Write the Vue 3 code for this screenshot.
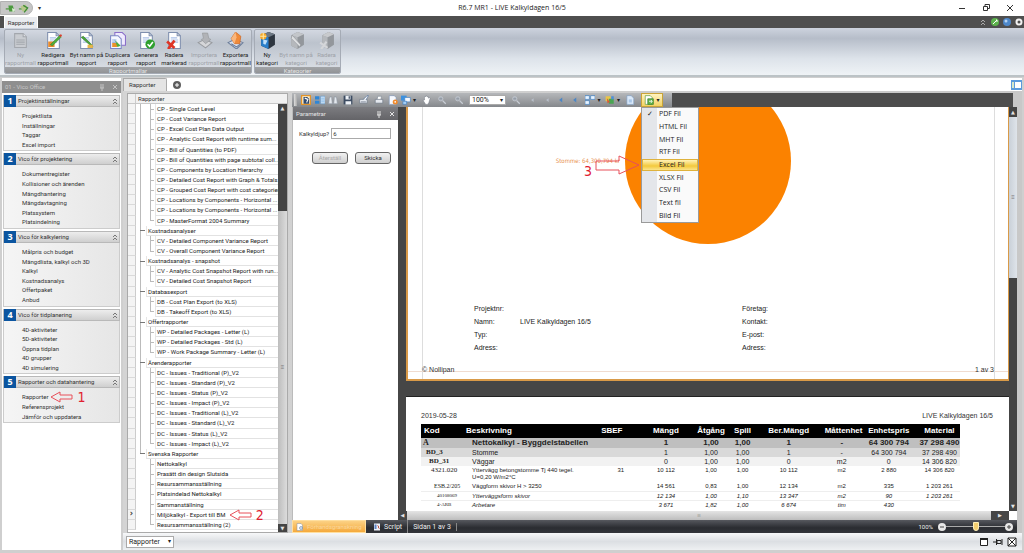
<script setup>
import { ref } from 'vue'

const sheet = (c = '#fff', s = '#7f8fae') =>
  `<path d="M2.5.5h8l3 3v12h-11z" fill="${c}" stroke="${s}"/><path d="M10.5.5v3h3" fill="none" stroke="${s}"/><path d="M4.500 5.500h6M4.500 7.500h7M4.500 9.500h7" stroke="#a9bfe6"/>`

const icons = {
  newGray: `<path d="M2.500 1.500h8l3 3v10h-11z" fill="#c9ccd1" stroke="#a3a7ad"/><path d="M4 7.500h8M4 9.500h8M4 11.500h8" stroke="#a3a7ad"/><path d="M10.500 1.500v3h3" stroke="#a3a7ad" fill="#dfe1e4"/>`,
  edit: `${sheet()}<path d="M3 9h6v5H3z" fill="#e98b2c"/><path d="M5 12 14 3l1 2-8 8z" fill="#4fae3c" stroke="#2f7d25" stroke-width=".5"/><path d="M13 3l2 2 1-2-1-1z" fill="#d9402c"/>`,
  rename: `${sheet()}<path d="M3 5l9 8 2 1-1-2-8-8z" fill="#49a53b" stroke="#2a6d22" stroke-width=".5"/><path d="M9 12h5v3H9z" fill="#e7b54a"/>`,
  duplicate: `<path d="M5.500.5h7l3 3v9h-10z" fill="#efeafd" stroke="#8a6fc9"/><path d="M1.500 3.500h7l3 3v9h-10z" fill="#f5f8ff" stroke="#7c86c4"/><path d="M3 10h5v4H3z" fill="#e9912c"/><path d="M5 7l6 6-3 1z" fill="#4fae3c"/><path d="M3 7.500h4M3 9.500h4" stroke="#88a7df"/>`,
  generate: `${sheet()}<circle cx="11.500" cy="11.500" r="4.500" fill="#2ea02e"/><path d="M9 11.500l2 2 3-4" stroke="#fff" stroke-width="1.500" fill="none"/>`,
  remove: `${sheet()}<path d="M1 9l7 6M8 8l-6 8" stroke="#df3526" stroke-width="2.600"/>`,
  importGray: `<path d="M2 10l6-3 7 3-6 5z" fill="#d5d6d9" stroke="#989ba0"/><path d="M6 1h5l1 5 2 1-5 4-4-4 2-1z" fill="#b1b3b7" stroke="#94979b" stroke-width=".6"/>`,
  exportUp: `<path d="M1 10l6-3 8 3-6 6z" fill="#d7e2f2" stroke="#6c7d99"/><path d="M4 11l5 3 4-3" fill="none" stroke="#6c7d99"/><path d="M8 0l5 4-1 7H7L4 6z" fill="#ef8a3a" stroke="#c9601a" stroke-width=".6"/><path d="M8 0l1 5-2 6L4 6z" fill="#f9b67c"/>`,
  category: `<path d="M2 3l7-3 6 2v10l-6 4-7-3z" fill="#2e3640"/><path d="M2 3l7 2v11l-7-3z" fill="#2a7fcb"/><path d="M2 3l7-3 6 2-6 3z" fill="#6d7884"/><path d="M4 7l4 1-2 4-2-1z" fill="#bfe0fa"/><circle cx="4" cy="4" r="3" fill="#f5a623"/><path d="M4 1v6M1 4h6" stroke="#ffe9a8"/>`,
  categoryGray: `<path d="M3 3l6-3 6 2v10l-6 4-6-3z" fill="#93979c"/><path d="M3 3l6 2v11l-6-3z" fill="#b5b8bc"/><path d="M3 3l6-3 6 2-6 3z" fill="#c3c6ca"/><path d="M4 3l8 9-1 2-8-8z" fill="#dcdee0" stroke="#888c91" stroke-width=".5"/>`,
  categoryDel: `<path d="M4 3l6-3 5 2v10l-6 4-5-3z" fill="#93979c"/><path d="M4 3l5 2v11l-5-3z" fill="#b5b8bc"/><path d="M4 3l6-3 5 2-6 3z" fill="#c8cacd"/><path d="M2 10l7 5M8 9l-5 7" stroke="#d4d6d9" stroke-width="2"/>`,
  search: `<path d="M1 1h14v14H1z" fill="#fff5d8" stroke="#e2942a" stroke-width="2"/><path d="M4 3h6l3 3v8H4z" fill="#314a6d"/><path d="M6 5l5 2-2 5" stroke="#fff" stroke-width="1.800" fill="none"/>`,
  thumbs: `<path d="M0 2h7v5H0zM0 9h7v5H0z" fill="#2f86d6"/><path d="M9 2h7v12H9z" fill="#e9f3fd" stroke="#5794cf"/><path d="M10 5h5M10 8h5M10 11h5" stroke="#2f86d6"/>`,
  binoculars: `<path d="M3 3h3v3l1 8H1l1-8zM10 3h3l1 3 1 8H9l1-8z" fill="#e3e7ec" stroke="#8d96a3"/>`,
  save: `<path d="M1 1h14v14H1z" fill="#3d4c62"/><path d="M4 1h8v6H4zM4 10h9v5H4z" fill="#edf1f6"/><path d="M9 2h2v4H9z" fill="#3d4c62"/>`,
  printQuick: `<path d="M1 7h12v6H1z" fill="#e4e8ee" stroke="#6a7484"/><path d="M7 7l6-6h2l-4 7" fill="#fff" stroke="#4c6d9c"/><path d="M3 11h8" stroke="#566173"/>`,
  print: `<path d="M2 7h12v6H2z" fill="#e4e8ee" stroke="#6a7484"/><path d="M5 7l1-5h6l-1 5z" fill="#fff" stroke="#7f8896"/>`,
  pageSetup: `<path d="M2 1h8l3 3v11H2z" fill="#f6f9ff" stroke="#7d93b5"/><circle cx="11.500" cy="11" r="4" fill="#ef8a2c"/><circle cx="11.500" cy="11" r="1.300" fill="#fff"/>`,
  scale: `<path d="M0 1h9v8H0z" fill="#3d91df"/><path d="M6 4h9v7H6z" fill="#f4f8ff" stroke="#3f7fc1"/><path d="M3 10h6v5H3z" fill="#a7cff5" stroke="#3f7fc1"/>`,
  hand: `<path d="M4 8V3l1-1 1 1 1-2 1 1v1l1-1 1 1v2l2-1 1 1-2 7-2 3H6L2 9l1-1z" fill="#fff" stroke="#5b6470" stroke-width=".6"/>`,
  magnify: `<circle cx="6" cy="6" r="3.500" fill="#a9b0ba" stroke="#c9ced6"/><path d="M9 9l5 5" stroke="#c9ced6" stroke-width="2"/><path d="M4 6h4" stroke="#7f8792"/>`,
  left: `<path d="M9 5L5 8l4 3z" fill="#b9c0ca"/>`,
  blueLeft: `<path d="M10 4L5 8l5 4z" fill="#4d86c4"/>`,
  pages: `<path d="M0 1h7v6H0zM9 1h7v6H9zM0 9h7v6H0z" fill="#e9f4ff" stroke="#2f79c2"/>`,
  color: `<path d="M1 2h8v8H1z" fill="#e8c64a"/><path d="M6 6h8v8H6z" fill="#4aa552"/><path d="M3 5l5 6-4 2z" fill="#d95b33"/><path d="M10 2h4v5h-4z" fill="#4d8fd8"/>`,
  watermark: `<path d="M3 1h7l4 4v10H3z" fill="#dbe9f9" stroke="#7f9fc4"/><path d="M6 7h5v5H6z" fill="#a9c7e8"/>`,
  exportDoc: `<path d="M2 1h8l3 3v11H2z" fill="#fff" stroke="#4b9238"/><path d="M6 6h9v9H6z" fill="#63b14a" stroke="#2f7a25"/><path d="M8 10h5M11 8l2 2-2 3" stroke="#fff" stroke-width="1.300" fill="none"/>`,
}

const ribbon = [
  { title: 'Rapportmallar', cls: 'wide', buttons: [
    ['newGray', 'Ny', 'rapportmall', true],
    ['edit', 'Redigera', 'rapportmall'],
    ['rename', 'Byt namn på', 'rapport'],
    ['duplicate', 'Duplicera', 'rapport'],
    ['generate', 'Generera', 'rapport'],
    ['remove', 'Radera', 'markerad'],
    ['importGray', 'Importera', 'rapportmall', true],
    ['exportUp', 'Exportera', 'rapportmall'],
  ] },
  { title: 'Kategorier', cls: 'narrow', buttons: [
    ['category', 'Ny', 'kategori'],
    ['categoryGray', 'Byt namn på', 'kategori', true],
    ['categoryDel', 'Radera', 'kategori', true],
  ] },
]

const groups = [
  ['Projektinställningar', ['Projektlista', 'Inställningar', 'Taggar', 'Excel import']],
  ['Vico för projektering', ['Dokumentregister', 'Kollisioner och ärenden', 'Mängdhantering', 'Mängdavtagning', 'Platssystem', 'Platsindelning']],
  ['Vico för kalkylering', ['Målpris och budget', 'Mängdlista, kalkyl och 3D', 'Kalkyl', 'Kostnadsanalys', 'Offertpaket', 'Anbud']],
  ['Vico för tidplanering', ['4D-aktiviteter', '5D-aktiviteter', 'Öppna tidplan', '4D grupper', '4D simulering']],
  ['Rapporter och datahantering', ['Rapporter', 'Referensprojekt', 'Jämför och uppdatera']],
]

const tree = [
  [null, ['CP - Single Cost Level', 'CP - Cost Variance Report', 'CP - Excel Cost Plan Data Output', 'CP - Analytic Cost Report with runtime sum...', 'CP - Bill of Quantities (to PDF)', 'CP - Bill of Quantities with page subtotal coll...', 'CP - Components by Location Hierarchy', 'CP - Detailed Cost Report with Graph & Totals', 'CP - Grouped Cost Report with cost categories', 'CP - Locations by Components - Horizontal ...', 'CP - Locations by Components - Horizontal ...', 'CP - MasterFormat 2004 Summary']],
  ['Kostnadsanalyser', ['CV - Detailed Component Variance Report', 'CV - Overall Component Variance Report']],
  ['Kostnadsanalys - snapshot', ['CV - Analytic Cost Snapshot Report with run...', 'CV - Detailed Cost Snapshot Report']],
  ['Databasexport', ['DB - Cost Plan Export (to XLS)', 'DB - Takeoff Export (to XLS)']],
  ['Offertrapporter', ['WP - Detailed Packages - Letter (L)', 'WP - Detailed Packages - Std (L)', 'WP - Work Package Summary - Letter (L)']],
  ['Ärenderapporter', ['DC - Issues - Traditional (P)_V2', 'DC - Issues - Standard (P)_V2', 'DC - Issues - Status (P)_V2', 'DC - Issues - Impact (P)_V2', 'DC - Issues - Traditional (L)_V2', 'DC - Issues - Standard (L)_V2', 'DC - Issues - Status (L)_V2', 'DC - Issues - Impact (L)_V2']],
  ['Svenska Rapporter', ['Nettokalkyl', 'Prasätt din design Slutsida', 'Resursammansställning', 'Platsindelad Nettokalkyl', 'Sammanställning', 'Miljökalkyl - Export till BM', 'Resursammansställning (2)']],
]
const rows = tree.flatMap(([name, kids], gi) => {
  const lastGroup = gi === tree.length - 1
  const out = name ? [{ text: name, cat: true, lastGroup }] : []
  kids.forEach((text, i) => out.push({ text, last: i === kids.length - 1, lastGroup, current: text.startsWith('Miljö') }))
  return out
})

const tools = ['search', 'thumbs', 'binoculars', 'save', 'printQuick', 'print', 'pageSetup', 'scale', 'hand', 'magnify', 'magnify']
const toolsAfter = ['magnify', 'left', 'left', 'blueLeft', 'blueLeft', 'pages', 'color', 'watermark']
const dropdowns = ['scale', 'pages', 'color']

const formats = ['PDF Fil', 'HTML Fil', 'MHT Fil', 'RTF Fil', 'Excel Fil', 'XLSX Fil', 'CSV Fil', 'Text fil', 'Bild Fil']
const chosen = ref('PDF Fil')
const hovered = ref('Excel Fil')

const heads = ['Kod', 'Beskrivning', 'SBEF', 'Mängd', 'Åtgång', 'Spill', 'Ber.Mängd', 'Måttenhet', 'Enhetspris', 'Material']
const lines = [
  ['l0', 'A', 'Nettokalkyl - Byggdelstabellen', '', '1', '1,00', '1,00', '1', '-', '64 300 794', '37 298 490'],
  ['l1', 'BD_3', 'Stomme', '', '1', '1,00', '1,00', '1', '-', '64 300 794', '37 298 490'],
  ['l2', 'BD_31', 'Väggar', '', '0', '1,00', '1,00', '0', 'm2', '0', '14 306 820'],
  ['l3', '4321.020', 'Yttervägg betongstomme Tj 440 tegel.\nU=0,20 W/m2°C', '31', '10 112', '1,00', '1,00', '10 112', 'm2', '2 880', '14 306 820'],
  ['l4', 'ESB.2/205', 'Väggform skivor H > 3250', '', '14 561', '0,83', '1,00', '12 134', 'm2', '335', '1 203 261'],
  ['l5', '40108069', 'Ytterväggsform skivor', '', '12 134', '1,00', '1,10', '13 347', 'm2', '90', '1 203 261'],
  ['l5', '4-ARB', 'Arbetare', '', '3 671', '1,82', '1,00', '6 674', 'tim', '430', ''],
  ['l4', 'ESB.2/205 H', 'Väggform skivor H > 3250', '', '14 561', '0,83', '1,00', '12 134', 'm2', '335', '1 203 261'],
]
const depth = ref('6')
const zoom = ref(50)
</script>

<template>
  <div class="app">
    <header class="titlebar">
      <div class="quick">
        <svg viewBox="0 0 32 12"><path d="M2 7h5M17 7h4" stroke="#74a568" stroke-width="2"/><path d="M5 3h5l2 7H6z" fill="#4c9a3f"/><path d="M9 6l4 2-3 3z" fill="#d9f0cf"/><path d="M19 4l6-2 2 7-6 1z" fill="#b8c78a"/><path d="M22 3l5 3-4 5" fill="none" stroke="#3e8c35" stroke-width="1.500"/></svg>
      </div>
      <span class="more">▾</span>
      <h1>R6.7 MR1 - LIVE Kalkyldagen 16/5</h1>
      <div class="winbtns">
        <button aria-label="Minimera"><svg viewBox="0 0 8 8"><path d="M1 4.500h6" stroke="#333"/></svg></button>
        <button aria-label="Återställ fönster"><svg viewBox="0 0 8 8"><path d="M1.500 2.500h4v4h-4zM3 2V.5h4.500v4H6" fill="none" stroke="#333"/></svg></button>
        <button aria-label="Stäng"><svg viewBox="0 0 8 8"><path d="M1 1l6 6M7 1L1 7" stroke="#333"/></svg></button>
      </div>
    </header>

    <nav class="tabstrip">
      <button class="rtab">Rapporter</button>
      <div class="helpers">
        <svg viewBox="0 0 8 8"><path d="M2 4l2-2 2 2M2 7l2-2 2 2" fill="none" stroke="#aaa"/></svg>
        <svg viewBox="0 0 8 8"><circle cx="4" cy="4" r="4" fill="#5cb24d"/><path d="M2 6l4-4M5 2h1v2" stroke="#fff" fill="none"/></svg>
        <svg viewBox="0 0 8 8"><circle cx="4" cy="4" r="4" fill="#4d87c9"/><circle cx="3" cy="3" r="1.500" fill="#b7d3f2"/></svg>
        <svg viewBox="0 0 8 8"><circle cx="4" cy="4" r="2.500" fill="none" stroke="#f2f2f2" stroke-width="2"/></svg>
      </div>
    </nav>

    <section class="ribbon">
      <div v-for="g in ribbon" :key="g.title" class="rgroup">
        <div class="rbtns" :class="g.cls">
          <button v-for="b in g.buttons" :key="b[0]" :disabled="b[3]">
            <svg viewBox="0 0 16 16" v-html="icons[b[0]]"></svg>
            <span>{{ b[1] }}<br>{{ b[2] }}</span>
          </button>
        </div>
        <div class="rtitle">{{ g.title }}</div>
      </div>
    </section>

    <div class="main">
      <aside class="side">
        <div class="sidehead"><span>01 - Vico Office</span>
          <svg viewBox="0 0 20 8"><path d="M3 1v4M5 1v4M2 5h4M4 5v3M15 2l4 4M19 2l-4 4" stroke="#c4c4c4" fill="none"/></svg>
        </div>
        <section v-for="(g, i) in groups" :key="g[0]" class="sgroup">
          <h2><b>{{ i + 1 }}</b><span>{{ g[0] }}</span><svg viewBox="0 0 8 8"><path d="M2 4l2-2 2 2M2 7l2-2 2 2" fill="none" stroke="#777"/></svg></h2>
          <ul>
            <li v-for="t in g[1]" :key="t"><a href="#">{{ t }}</a>
              <span v-if="t === 'Rapporter'" class="note"><svg viewBox="0 0 23 12"><path d="M1 6l9-5v3h12v4H10v3z" fill="none" stroke="#e8505a"/></svg>1</span>
            </li>
          </ul>
        </section>
      </aside>

      <div class="work">
        <div class="doctabs">
          <button class="dtab">Rapporter</button>
          <button class="add" aria-label="Ny flik"><svg viewBox="0 0 8 8"><circle cx="4" cy="4" r="4" fill="#5d5d5d"/><path d="M4 2v4M2 4h4" stroke="#fff"/></svg></button>
          <svg class="winlist" viewBox="0 0 11 10"><path d="M0 0h11v10H0z" fill="#5b9bdc"/><path d="M4 2h6v6H4z" fill="#fff"/><path d="M1 2h2v6H1z" fill="#d6e8c8"/></svg>
        </div>

        <div class="body">
          <section class="treepane">
            <div class="treehead"><i></i><span>Rapporter</span></div>
            <div class="treebody">
              <ul class="tree">
                <li v-for="(r, i) in rows" :key="i" :class="{ cat: r.cat, last: r.last, end: r.lastGroup }">
                  <i class="ind">{{ r.current ? '›' : '' }}</i>
                  <i class="g1"></i><i v-if="!r.cat" class="g2"></i>
                  <span class="cell">{{ r.text }}
                    <span v-if="r.current" class="note"><svg viewBox="0 0 23 12"><path d="M1 6l9-5v3h12v4H10v3z" fill="none" stroke="#e8505a"/></svg>2</span>
                  </span>
                </li>
              </ul>
              <div class="vbar treebar"><span class="arr">▲</span><i class="before"></i><i class="thumb">≡</i><span class="arr">▼</span></div>
            </div>
          </section>

          <section class="viewer">
            <div class="toolrow">
              <div class="toolbar">
                <i class="grip"></i>
                <button v-for="(t, i) in tools" :key="'a' + i" :aria-label="t"><svg viewBox="0 0 16 16" v-html="icons[t]"></svg><small v-if="dropdowns.includes(t)">▾</small></button>
                <div class="zoomsel"><select aria-label="Zoom"><option>100%</option></select><small>▾</small></div>
                <button v-for="(t, i) in toolsAfter" :key="'b' + i" :aria-label="t"><svg viewBox="0 0 16 16" v-html="icons[t]"></svg><small v-if="dropdowns.includes(t)">▾</small></button>
                <div class="export">
                  <button aria-label="Exportera"><svg viewBox="0 0 16 16" v-html="icons.exportDoc"></svg><small>▾</small></button>
                  <div class="menu">
                    <button v-for="f in formats" :key="f" :class="{ hot: f === hovered }" @mouseenter="hovered = f" @click="chosen = f">
                      <i>{{ f === chosen ? '✓' : '' }}</i><span>{{ f }}</span>
                    </button>
                  </div>
                </div>
              </div>
            </div>

            <div class="stage">
              <form class="params" @submit.prevent>
                <div class="phead"><span>Parametrar</span>
                  <svg viewBox="0 0 20 8"><path d="M3 1v4M5 1v4M2 5h4M4 5v3M15 2l4 4M19 2l-4 4" stroke="#e4e4e4" fill="none"/></svg>
                </div>
                <div class="field"><label for="depth">Kalkyldjup?</label><input id="depth" v-model="depth" type="text"></div>
                <div class="pbtns"><button type="reset" disabled>Återställ</button><button type="submit">Skicka</button></div>
              </form>

              <div class="canvaswrap">
                <div class="canvasrow">
                  <div class="canvas">
                    <article class="page first">
                      <div class="chart">
                        <svg class="pie" viewBox="0 29 166 137"><circle cx="83" cy="83" r="83" fill="#fb8200"/></svg>
                        <span class="slice">Stomme: 64,300,794 kr</span>
                        <svg class="arrow3" viewBox="0 0 46 20"><path d="M1 6h23V1l20 9-20 9v-4H1z" fill="none" stroke="#e8505a"/></svg>
                        <span class="three">3</span>
                      </div>
                      <dl class="info">
                        <dt>Projektnr:</dt><dd></dd><dt>Företag:</dt>
                        <dt>Namn:</dt><dd>LIVE Kalkyldagen 16/5</dd><dt>Kontakt:</dt>
                        <dt>Typ:</dt><dd></dd><dt>E-post:</dt>
                        <dt>Adress:</dt><dd></dd><dt>Adress:</dt>
                      </dl>
                      <footer><span>© Nollipan</span><span>1 av 3</span></footer>
                    </article>
                    <article class="page second">
                      <div class="phdr"><span>2019-05-28</span><span>LIVE Kalkyldagen 16/5</span></div>
                      <table>
                        <colgroup><col class="c1"><col class="c2"><col class="c3"><col class="c4"><col class="c5"><col class="c6"><col class="c7"><col class="c8"><col class="c9"><col class="c10"></colgroup>
                        <thead><tr><th v-for="h in heads" :key="h" scope="col">{{ h }}</th></tr></thead>
                        <tbody><tr v-for="(l, i) in lines" :key="i" :class="l[0]"><td v-for="(c, j) in l.slice(1)" :key="j">{{ c }}</td></tr></tbody>
                      </table>
                    </article>
                  </div>
                  <div class="vbar pagebar"><span class="arr">▲</span><i class="thumb">≡</i><i class="after"></i><span class="arr">▼</span></div>
                </div>
                <div class="hbar"><span class="arr">◀</span><i class="thumb">|||</i><span class="arr right">▶</span><b></b></div>
              </div>
            </div>

            <div class="status">
              <button class="preview"><svg viewBox="0 0 16 16"><path d="M2 1h8l3 3v11H2z" fill="#fff" stroke="#8a8f98"/><circle cx="10" cy="10" r="3" fill="#cfe3f7" stroke="#56708f"/></svg>Förhandsgranskning</button>
              <button class="script"><svg viewBox="0 0 16 16"><path d="M2 1h12v14H2z" fill="#eef3fb"/><path d="M3 3h4v9H3z" fill="#5d83c3"/><path d="M9 5c4 0 0 6 4 6" stroke="#c04f3f" stroke-width="2" fill="none"/></svg>Script</button>
              <span class="pagenr">Sidan 1 av 3</span>
              <label class="zl" for="zoom">100%</label>
              <svg class="zb" viewBox="0 0 8 8"><circle cx="4" cy="4" r="4" fill="#e8e8e8"/><path d="M2 4h4" stroke="#444"/></svg>
              <input id="zoom" v-model="zoom" type="range" min="0" max="100">
              <svg class="zb" viewBox="0 0 8 8"><circle cx="4" cy="4" r="4" fill="#e8e8e8"/><path d="M2 4h4M4 2v4" stroke="#444"/></svg>
            </div>
          </section>
        </div>

        <div class="bottom">
          <div class="combo"><select aria-label="Vy"><option>Rapporter</option></select><small>▾</small></div>
          <div class="bicons">
            <svg viewBox="0 0 10 10"><path d="M1.500 1.500h7v7h-7z" fill="#fff" stroke="#222"/><path d="M1 2h8" stroke="#222" stroke-width="2"/></svg>
            <svg viewBox="0 0 10 10"><path d="M0 5h3M3.500 2v6M4 3.500h4v3H4zM9 2v6" stroke="#222" fill="none"/></svg>
            <svg viewBox="0 0 10 10"><path d="M1 1h8v8H1zM1 1l8 8M9 1L1 9" stroke="#222" fill="#fff"/></svg>
          </div>
        </div>
      </div>
    </div>
  </div>
</template>

<style>
html, body { margin: 0; background: #cfcfcf; }
</style>

<style scoped>
* { box-sizing: border-box; }
.app {
  display: flex; flex-direction: column; height: 100vh; overflow: hidden;
  font: 6px/8px Roboto, "Liberation Sans", sans-serif; color: #333; background: #cfcfcf;
}
button, select, input { font: inherit; color: inherit; margin: 0; padding: 0; border: 0; background: none; border-radius: 0; }
ul, dl, dd, h1, h2 { margin: 0; padding: 0; list-style: none; font: inherit; }
i { font-style: normal; }
svg { display: block; flex: none; }
small { font: 6px/8px "DejaVu Sans", sans-serif; color: #222; }

.titlebar { flex: none; height: 16px; background: #fff; display: grid; grid-template-columns: 33px 12px 1fr 66px; align-items: center; }
.quick { height: 14px; background: #c6c6c6; border-radius: 0 7px 7px 0; padding-left: 3px; border: 1px solid #b2b2b2; }
.quick svg { width: 28px; height: 12px; }
.more { text-align: center; }
h1 { text-align: center; font: 7px/16px "Open Sans", sans-serif; color: #222; padding-left: 21px; }
.winbtns { display: flex; gap: 16px; }
.winbtns svg { width: 8px; height: 8px; }

.tabstrip { flex: none; height: 12px; background: #4f4f4f; display: flex; justify-content: space-between; align-items: stretch; padding: 0 1px 0 4px; }
.rtab { width: 34px; background: #e9ebef; border: 1px solid #fff; border-bottom: 0; }
.helpers { display: flex; gap: 4px; align-items: center; }
.helpers svg { width: 8px; height: 8px; }

.ribbon { flex: none; height: 49px; display: flex; gap: 2px; padding: 1px 4px; background: linear-gradient(#cdd3de, #b6bdc9 22%, #dde3ea 65%, #eff3f6); border-radius: 0 3px 0 0; border-bottom: 2px solid #bcc3c6; }
.rgroup { display: flex; flex-direction: column; border: 1px solid #a5abb5; border-radius: 2px; overflow: hidden; background: linear-gradient(#d3d8e1, #bcc3cd 30%, #dde1e7); }
.rbtns { flex: 1; display: grid; }
.wide { grid-template-columns: 31px 34px 33px 29px 28px 28px 32px 31px; }
.narrow { grid-template-columns: 24px 34px 27px; }
.rbtns button { display: flex; flex-direction: column; align-items: center; padding-top: 2px; gap: 2px; white-space: nowrap; color: #222; line-height: 8px; }
.rbtns button:disabled { color: #9ea2a8; }
.rbtns svg { width: 17px; height: 17px; }
.rtitle { height: 9px; text-align: center; color: #e6e6e6; background: linear-gradient(#a2a4a7, #8c8e91); }

.main { flex: 1; min-height: 0; display: flex; gap: 2px; padding: 1px 2px 3px 2px; }
.side { width: 119px; flex: none; background: #fff; }
.sidehead { height: 12px; margin: 3px 0 2px; background: #8f8f8f; color: #c9c9c9; display: flex; align-items: center; justify-content: space-between; padding: 0 3px; }
.sidehead svg, .phead svg { width: 20px; height: 8px; }
.sgroup { margin: 0 1px; padding-bottom: 2px; }
.sgroup h2 { display: flex; align-items: center; height: 12px; border: 1px solid #b9b9b9; background: linear-gradient(#ededed, #cfcfcf); }
.sgroup b { width: 12px; height: 12px; background: #0b55a0; color: #fff; text-align: center; font: bold 9px/12px "Open Sans", sans-serif; }
.sgroup h2 span { flex: 1; padding-left: 2px; }
.sgroup h2 svg { width: 8px; height: 8px; }
.sgroup ul { background: linear-gradient(90deg, #f5f5f5, #e6e6e6); border: 1px solid #ccc; border-top: 0; padding: 4px 0 1px 18px; line-height: 1.6; }
.sgroup li { display: flex; align-items: center; }
.sgroup a { color: inherit; text-decoration: none; }
.note { display: inline-flex; align-items: center; gap: 4px; font: 14px/10px "DejaVu Sans Condensed", sans-serif; color: #e02030; margin: -3px 0 -3px 2px; vertical-align: middle; }
.note svg { width: 23px; height: 12px; }
.sgroup .note { height: 6px; }

.work { flex: 1; min-width: 0; display: flex; flex-direction: column; }
.doctabs { flex: none; height: 13px; background: #fff; display: flex; align-items: center; }
.dtab { width: 44px; align-self: stretch; text-align: left; padding-left: 5px; background: #e4e4e4; border: 1px solid #aaa; border-bottom: 0; border-radius: 0 2px 0 0; }
.add { margin-left: 6px; }
.add svg { width: 8px; height: 8px; }
.winlist { margin-left: auto; width: 11px; height: 10px; }

.body { flex: 1; min-height: 0; display: flex; gap: 4px; padding: 2px 5px 0 4px; background: linear-gradient(90deg, #d4d4d4, #c8c8c8); }
.treepane { width: 161px; flex: none; display: flex; flex-direction: column; background: #fff; border: 1px solid #aaa; }
.treehead { flex: none; height: 10px; display: flex; line-height: 10px; background: #f1f1f1; border-bottom: 1px solid #c8c8c8; }
.treehead i { width: 8px; border-right: 1px solid #ccc; }
.treehead span { padding-left: 2px; }
.treebody { flex: 1; min-height: 0; display: flex; }
.tree { flex: 1; min-width: 0; display: grid; grid-auto-rows: 1fr; padding-bottom: 2px; }
.tree li { display: flex; min-height: 0; }
.ind { width: 8px; flex: none; border-right: 1px solid #ccc; border-bottom: 1px solid #dadada; background: #f4f4f4; text-align: center; font: bold 8px/8px "DejaVu Sans", sans-serif; color: #333; }
.g1 { width: 10px; flex: none; margin-left: 4px; background: linear-gradient(#bbb, #bbb) 0 0 / 1px 100% no-repeat; }
.cat .g1 { width: 6px; background: linear-gradient(#777, #777) 0 50% / 5px 1px no-repeat, linear-gradient(#bbb, #bbb) 0 0 / 1px 100% no-repeat; }
.cat.end .g1 { background: linear-gradient(#777, #777) 0 50% / 5px 1px no-repeat, linear-gradient(#bbb, #bbb) 0 0 / 1px 50% no-repeat; }
.end:not(.cat) .g1 { background: none; }
.g2 { width: 5px; flex: none; background: linear-gradient(#bbb, #bbb) 0 50% / 4px 1px no-repeat, linear-gradient(#bbb, #bbb) 0 0 / 1px 100% no-repeat; }
.last .g2 { background: linear-gradient(#bbb, #bbb) 0 50% / 4px 1px no-repeat, linear-gradient(#bbb, #bbb) 0 0 / 1px 50% no-repeat; }
.cell { flex: 1; min-width: 0; border-bottom: 1px solid #e2e2e2; border-left: 1px solid #e6e6e6; padding-left: 1px; white-space: nowrap; line-height: 10px; color: #222; }

.vbar { display: flex; flex-direction: column; flex: none; background: #444; color: #ddd; }
.arr { font: 5px/8px "DejaVu Sans", sans-serif; text-align: center; color: #e4e4e4; flex: none; }
.thumb { display: flex; align-items: center; justify-content: center; color: #777; }
.treebar { width: 9px; }
.treebar .before { flex: 99; }
.treebar .thumb { flex: 314; background: linear-gradient(90deg, #bdbdbd, #dcdcdc); }

.viewer { flex: 1; min-width: 0; display: flex; flex-direction: column; }
.toolrow { flex: none; height: 14px; background: #4d4d4d; margin-right: 4px; }
.toolbar { width: 380px; height: 14px; display: grid; align-items: stretch; background: linear-gradient(#b5b7ba, #85888c);
  grid-template-columns: 7px 14px 13px 14px 15px 17px 14px 13px 19px 17px 13px 21px 37px 19px 16px 13px 13px 16px 20px 19px 15px 26px; }
.grip { background: linear-gradient(90deg, #ddd, #aaa); margin: 1px 2px; }
.toolbar button { display: flex; align-items: center; justify-content: center; gap: 2px; }
.toolbar button svg { width: 10px; height: 10px; }
.zoomsel, .combo { position: relative; background: #fff; border: 1px solid #aaa; margin: 2px 0; }
.zoomsel select, .combo select { appearance: none; width: 100%; height: 100%; padding-left: 2px; display: block; color: #222; font-size: 7px; line-height: 8px; }
.zoomsel small, .combo small { position: absolute; right: 2px; top: 0; pointer-events: none; }
.export { position: relative; padding-left: 4px; display: flex; z-index: 2; }
.export > button { width: 22px; background: linear-gradient(#fff3c0, #f3d263); border: 1px solid #c9a437; }
.menu { position: absolute; top: 14px; left: 4px; width: 58px; height: 116px; display: grid; grid-auto-rows: 1fr; background: linear-gradient(90deg, #e4e6ea 15px, #fafafa 15px); border: 1px solid #9a9a9a; font: 7px/10px "Open Sans", sans-serif; }
.menu button { display: grid; grid-template-columns: 14px 1fr; justify-content: stretch; text-align: left; border: 1px solid transparent; gap: 2px; color: #222; }
.menu i { text-align: center; }
.menu .hot { background: linear-gradient(#fff2b8, #f3c93c 60%, #fae48c); border-color: #dfb23c; }

.stage { flex: 1; min-height: 0; display: flex; background: #464646; }
.params { width: 106px; flex: none; background: #fff; border-left: 1px solid #bbb; }
.phead { height: 13px; background: linear-gradient(#7c7c80, #646468); color: #e4e4e4; display: flex; align-items: center; justify-content: space-between; padding: 0 3px; }
.field { display: flex; align-items: center; gap: 2px; padding: 8px 7px 0 6px; }
.field input { flex: 1; min-width: 0; height: 11px; border: 1px solid #aaa; padding-left: 1px; }
.pbtns { display: flex; gap: 7px; padding: 13px 7px 0 19px; }
.pbtns button { flex: 1; height: 12px; border: 1px solid #666; border-radius: 3px; background: linear-gradient(#f2f2f2, #cfcfcf); }
.pbtns button:disabled { color: #aaa; }

.canvaswrap { flex: 1; min-width: 0; display: flex; flex-direction: column; }
.canvasrow { flex: 1; min-height: 0; display: flex; }
.canvas { flex: 1; min-width: 0; overflow: hidden; display: flex; flex-direction: column; gap: 15px; padding-left: 8px; font: 7px/13px "Liberation Sans", sans-serif; }
.page { background: #fff; }
.first { flex: none; border: 2px solid #d99a48; border-top: 0; border-right-width: 1px; }
.first { background:
  linear-gradient(#ddd, #ddd) 14px 0 / 1px 100% no-repeat,
  linear-gradient(#ddd, #ddd) calc(100% - 13px) 0 / 1px 100% no-repeat,
  linear-gradient(#f0dcd0, #f0dcd0) 0 calc(100% - 7px) / 100% 1px no-repeat, #fff; }
.chart { position: relative; display: flex; justify-content: center; }
.pie { width: 166px; height: 137px; }
.slice { position: absolute; right: calc(50% + 88px); top: 47px; color: #e8914e; font: 6px/13px "DejaVu Sans Condensed", sans-serif; white-space: nowrap; }
.arrow3 { position: absolute; left: calc(50% - 113px); top: 48px; width: 46px; height: 20px; }
.three { position: absolute; left: calc(50% - 124px); top: 55px; font: 14px/18px "DejaVu Sans Condensed", sans-serif; color: #e02030; }
.info { display: grid; grid-template-columns: 46px 222px 1fr; grid-auto-rows: 13px; padding: 58px 0 0 66px; color: #222; }
footer { display: flex; justify-content: space-between; padding: 9px 14px 3px 14px; }
.second { flex: 1; min-height: 0; overflow: hidden; border-top: 1px solid #222; padding: 12px 16px 0 15px; }
.phdr { display: flex; justify-content: space-between; line-height: 13px; padding-bottom: 2px; }
table { border-collapse: collapse; table-layout: fixed; width: calc(100% - 33px); color: #222; }
.c1 { width: 45px; } .c2 { width: 133px; } .c3 { width: 43px; } .c4 { width: 47px; } .c5 { width: 43px; } .c6 { width: 20px; } .c7 { width: 72px; } .c8 { width: 34px; } .c9 { width: 60px; } .c10 { width: 41px; }
th, td { padding: 0; text-align: center; white-space: nowrap; }
th { background: #000; color: #fff; font: bold 8px/14px "Liberation Sans", sans-serif; }
th:nth-child(-n+2), td:nth-child(-n+2) { text-align: left; }
th:first-child { padding-left: 3px; }
th:nth-child(3) { padding-right: 18px; }
td { line-height: 9px; }
td:first-child { font-family: "Liberation Serif", serif; padding-left: 2px; }
td:nth-child(2) { padding-left: 6px; white-space: pre; }
.l0 { background: #bfbfbf; font-weight: bold; font-size: 8px; }
.l0 td { line-height: 10px; }
.l1 { background: #d9d9d9; }
.l2 { background: #f2f2f2; }
.l1 td:first-child, .l2 td:first-child { font-weight: bold; padding-left: 5px; }
.l2 td:first-child { padding-left: 8px; }
.l3, .l4, .l5 { font-size: 6px; }
.l3 td { vertical-align: top; line-height: 7px; height: 16px; padding-top: 1px; }
.l3 td:first-child { padding-left: 10px; font-size: 7px; }
.l4 td:first-child { padding-left: 13px; }
.l5 { font-style: italic; }
.l5 td { line-height: 8px; border-top: 1px solid #eee; }
.l5 td:first-child { padding-left: 16px; font-size: 5px; font-style: normal; }

.pagebar { width: 8px; }
.pagebar .arr { line-height: 10px; }
.pagebar .thumb { flex: 160; background: linear-gradient(90deg, #c9d0d8, #dfe4ea); }
.pagebar .after { flex: 222; }
.hbar { flex: none; height: 9px; display: flex; }
.hbar .arr { width: 9px; }
.hbar .thumb { flex: 1; background: linear-gradient(#e4e4e4, #bdbdbd); font-size: 4px; }
.hbar .right { width: 18px; }
.hbar b { width: 8px; background: #fff; }

.status { flex: none; height: 13px; display: flex; align-items: center; background: linear-gradient(#56585e, #2a2c31 60%, #34363b); color: #eee; padding-right: 4px; font-size: 7px; }
.status button { display: flex; align-items: center; height: 13px; }
.status button svg { width: 8px; height: 8px; margin-right: 3px; }
.status .preview { width: 74px; padding-left: 3px; background: linear-gradient(#fbd184, #f5a93c); border: 1px solid #ffdf9f; color: #fbd79a; white-space: nowrap; font-size: 6px; }
.status .script { padding: 0 5px 0 7px; border-right: 1px solid #888; }
.pagenr { padding: 0 5px; border-right: 1px solid #888; }
.zl { margin-left: auto; padding-right: 5px; font-size: 6px; }
.zb { width: 8px; height: 8px; }
#zoom { appearance: none; width: 59px; height: 10px; background: linear-gradient(#aaa, #aaa) 0 50% / 100% 1px no-repeat; }
#zoom::-webkit-slider-thumb { appearance: none; width: 6px; height: 9px; background: #f4cf70; border: 1px solid #fff0b8; border-radius: 0 0 3px 3px; }

.bottom { flex: none; height: 17px; display: flex; justify-content: space-between; align-items: center; padding: 0 5px 0 3px; background: linear-gradient(#f7f8f9, #dcdfe3 50%, #eef0f2); }
.combo { width: 48px; height: 12px; }
.bicons { display: flex; gap: 4px; }
.bicons svg { width: 10px; height: 10px; }
</style>
